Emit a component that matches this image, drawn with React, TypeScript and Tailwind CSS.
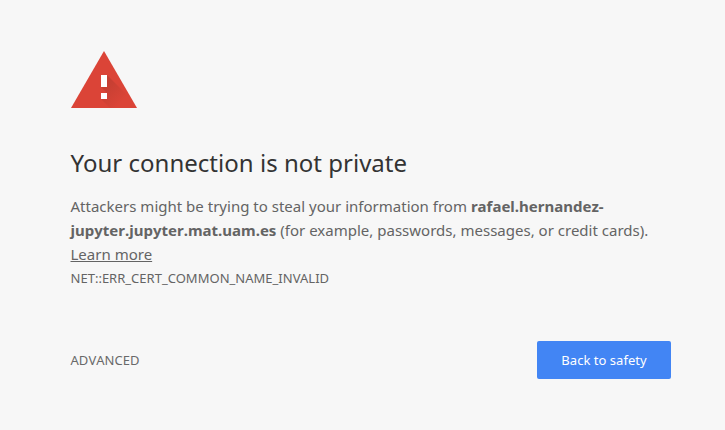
export default function App() {
  return (
    <main className="h-[430px] w-[725px] overflow-hidden bg-[#f7f7f7] pl-[70.5px] pt-[51px] font-['Noto_Sans',sans-serif] text-[15px] leading-6 text-[#646464]">
      <svg className="ml-[.5px] block" width="66" height="57" viewBox="0 0 66 57">
        <defs>
          <linearGradient id="shadow" gradientUnits="userSpaceOnUse" x1="32" y1="32" x2="51" y2="51">
            <stop offset="0" stopColor="#b23a2e" stopOpacity=".6" />
            <stop offset="1" stopColor="#b23a2e" stopOpacity="0" />
          </linearGradient>
        </defs>
        <path d="M33 0 66 57H0Z" fill="#db4437" />
        <path d="M36 24 63 51 66 57H39L30 48 36 42 30 36Z" fill="url(#shadow)" />
        <path d="M30 24h6v12h-6zM30 42h6v6h-6z" fill="#fff" />
      </svg>
      <h1 className="mt-[40px] text-[24px] leading-[29px] tracking-[.02px] text-[#333]">Your connection is not private</h1>
      <p className="mt-[17px] w-[600px] tracking-[.008px]">
        Attackers might be trying to steal your information from <strong className="font-bold [font-kerning:none]">rafael.hernandez-jupyter.jupyter.mat.uam.es</strong> (for example, passwords, messages, or credit cards). <a href="#" className="underline">Learn more</a>
      </p>
      <div className="text-[13px] tracking-[.015px]">NET::ERR_CERT_COMMON_NAME_INVALID</div>
      <div className="mt-[51px] flex w-[600.5px] items-center justify-between text-[13px]">
        <button className="tracking-[.04px] text-[#696969] [font-kerning:none]">ADVANCED</button>
        <button className="h-[38px] w-[134px] rounded-[2px] bg-[#4285f4] tracking-[.03px] text-white [font-kerning:none]">Back to safety</button>
      </div>
    </main>
  );
}
